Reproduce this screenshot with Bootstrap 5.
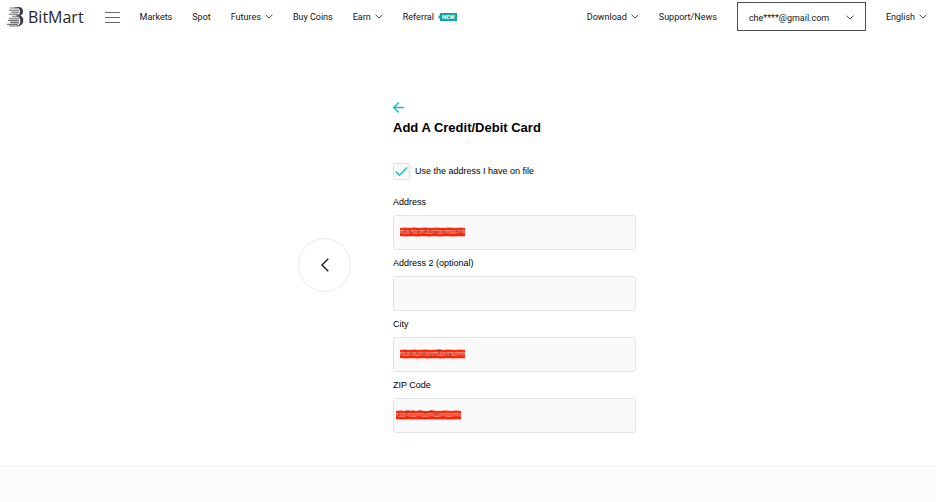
<!DOCTYPE html>
<html lang="en">
<head>
<meta charset="utf-8">
<meta name="viewport" content="width=device-width, initial-scale=1">
<title>BitMart - Add A Credit/Debit Card</title>
<link rel="stylesheet" href="https://cdn.jsdelivr.net/npm/bootstrap@5.3.0/dist/css/bootstrap.min.css">
<style>
body { font: 9px/15px "Liberation Sans", Arial, sans-serif; color: #000; background: #fbfbfb; }
a, button { color: inherit; }
svg { display: block; fill: none; flex: none; }
.topbar { font: 9px/14px Roboto, sans-serif; color: #1d1f24; padding: 2px 9px 2px 7px; background: #fff; }
.brand { font: 16px/20px "Open Sans", sans-serif; color: #24262d; gap: 4px; margin-right: 21px; }
.links { gap: 20px; }
.links a, .links button { font: 9px/14px Roboto, sans-serif; color: #111318; }
.account { width: 129px; height: 29px; border: 1px solid #4b4d52; padding: 2px 11px 0; }
.tag-new { font: bold 6px/8px Roboto, sans-serif; color: #fff; background: #12a5a0; padding: 0 2px; margin-left: 2px; position: relative; }
.tag-new::before { content: ""; position: absolute; left: -2px; top: 2px; border: 2px solid transparent; border-left: 0; border-right-color: #12a5a0; }
.stage { background: #fff; padding: 63px 2px 32px 0; gap: 42px; }
.round { width: 53px; height: 54px; border: 1px solid #ececec; }
.card-form { width: 243px; }
.back { height: 22px; }
.title { font-size: 13px; line-height: 20px; font-weight: 700; margin-bottom: 25px; }
.tick, .tick:checked { width: 17px; height: 17px; border: 1px solid #dde2e7; border-radius: 2px; background: #f7f8f8; }
.tick + svg { position: absolute; left: 2px; top: 3px; pointer-events: none; visibility: hidden; }
.tick:checked + svg { visibility: visible; }
.same { gap: 5px; margin-bottom: 15px; }
.field { margin-bottom: 6px; }
.field:last-child { margin-bottom: 0; }
.field label { margin-bottom: 5px; }
.field input { height: 35px; font-size: 9px; padding: 8px; border: 1px solid #e0e5ea; border-radius: 3px; background: #fafafa; }
.redact { position: absolute; left: 7px; top: 12px; pointer-events: none; }
.redact-zip { left: 3px; }
</style>
<script src="https://cdn.jsdelivr.net/npm/bootstrap@5.3.0/dist/js/bootstrap.bundle.min.js"></script>
</head>
<body>
<svg width="0" height="0" class="position-absolute" aria-hidden="true">
  <symbol id="chev" viewBox="0 0 8 5"><path d="M.5.6 4 4.100 7.500.6" stroke="#33353a" stroke-width=".9"/></symbol>
  <symbol id="scribble" viewBox="0 0 66 10">
    <path d="M0 2.300 5 1.900 9 2.400 14 1.900 19 2.400 25 1.900 31 2.400 37 1.900 43 2.400 49 1.900 55 2.400 60 1.900 65 2.200" stroke="#ff2a0c" stroke-width="2.600"/>
    <path d="M0 7.500 6 7.900 11 7.400 17 7.900 23 7.400 29 7.900 35 7.400 41 7.900 47 7.400 53 7.900 59 7.400 65 7.700" stroke="#ff2206" stroke-width="3"/>
    <path d="M0 5 5 4.600 10 5.100 16 4.600 22 5.100 28 4.600 34 5.100 40 4.600 46 5.100 52 4.600 58 5.100 65 4.800" stroke="#f4593f" stroke-width="2.200"/>
  </symbol>
</svg>
<header class="topbar d-flex align-items-center">
  <a href="#" class="brand d-flex align-items-center text-decoration-none">
    <svg width="17" height="21" viewBox="0 0 17 21" aria-hidden="true">
      <path d="M6 1h5.500c3 0 4.500 1.600 4.500 4.200 0 2.400-1 4-3 4.600 2.300.6 3.300 2 3.300 4.400 0 3.600-2.300 6-6 6H9c3-.5 4.300-2.500 4.300-5.300 0-2.800-1.300-3.900-4-4.300V9.400c2.500-.3 3.700-1.600 3.700-4 0-2.100-1-3-3-3.300Z" fill="#3d3e42"/>
      <path d="M3 2h8M2 4.200h10M4 6.300h8M2 8.300h9M5 10.200h8M2 12.300h10M1 14.400h11M3 16.400h9M0 18.400h11M2 20h9" stroke="#717275" stroke-width="1.100"/>
      <path d="M7 3.100h4M6 5.300h5M5 7.300h6M5 13.300h6M4 15.400h7M5 17.400h7" stroke="#aaa" stroke-width=".7"/>
    </svg>
    <span>BitMart</span>
  </a>
  <button class="btn p-0 border-0 me-3" aria-label="Menu">
    <svg width="15" height="12" viewBox="0 0 15 12"><path d="M0 1.500h15M0 6.500h15M0 11.500h15" stroke="#66686e"/></svg>
  </button>
  <nav class="links d-flex align-items-center flex-grow-1 ms-1">
    <a href="#" class="text-decoration-none">Markets</a>
    <a href="#" class="text-decoration-none">Spot</a>
    <button class="btn p-0 border-0 d-flex align-items-center gap-1">Futures <svg width="8" height="5"><use href="#chev"/></svg></button>
    <a href="#" class="text-decoration-none">Buy Coins</a>
    <button class="btn p-0 border-0 d-flex align-items-center gap-1">Earn <svg width="8" height="5"><use href="#chev"/></svg></button>
    <a href="#" class="text-decoration-none d-flex align-items-center gap-1">Referral <span class="tag-new">NEW</span></a>
  </nav>
  <div class="links d-flex align-items-center">
    <button class="btn p-0 border-0 d-flex align-items-center gap-1">Download <svg width="8" height="5"><use href="#chev"/></svg></button>
    <a href="#" class="text-decoration-none">Support/News</a>
    <button class="account btn rounded-0 d-flex align-items-center justify-content-between">che****@gmail.com <svg width="8" height="5"><use href="#chev"/></svg></button>
    <button class="btn p-0 border-0 d-flex align-items-center gap-1">English <svg width="8" height="5"><use href="#chev"/></svg></button>
  </div>
</header>
<main class="stage d-flex justify-content-center align-items-center">
  <button class="round btn rounded-circle p-0 d-flex align-items-center justify-content-center" aria-label="Previous">
    <svg width="8" height="14" viewBox="0 0 8 14"><path d="M7.300.7 1 7l6.300 6.300" stroke="#111" stroke-width="1.300"/></svg>
  </button>
  <form class="card-form">
    <a href="#" class="back d-flex align-items-center" aria-label="Back">
      <svg width="11" height="11" viewBox="0 0 11 11"><path d="M11 5.500H.8M5.700.5l-5 5 5 5" stroke="#13bdc0" stroke-width="1.300"/></svg>
    </a>
    <h1 class="title">Add A Credit/Debit Card</h1>
    <div class="same d-flex align-items-center">
      <div class="position-relative d-flex">
        <input type="checkbox" id="same" class="tick form-check-input m-0" checked>
        <svg width="13" height="11" viewBox="0 0 13 11"><path d="m1 5.500 3.500 3.700L12 1.500" stroke="#13bdc0" stroke-width="1.300"/></svg>
      </div>
      <label for="same">Use the address I have on file</label>
    </div>
    <div class="field">
      <label for="addr" class="d-block">Address</label>
      <div class="position-relative">
        <input type="text" id="addr" class="form-control">
        <svg class="redact" width="66" height="10"><use href="#scribble"/><path d="M5 3v3M9 2l2 4M18 3v4M24 4h3M30 3v3M33 5h6M43 3l2 4M49 2h3M56 4h3M61 3v4" stroke="#65423c" stroke-width=".8"/></svg>
      </div>
    </div>
    <div class="field">
      <label for="addr2" class="d-block">Address 2 (optional)</label>
      <input type="text" id="addr2" class="form-control">
    </div>
    <div class="field">
      <label for="city" class="d-block">City</label>
      <div class="position-relative">
        <input type="text" id="city" class="form-control">
        <svg class="redact" width="66" height="10"><use href="#scribble"/><path d="M6 1v4M10 4h3M16 4h2M22 4h4M30 5l1 4M38 1h4M39 1v4M46 2v3M50 4l1 4" stroke="#65423c" stroke-width=".8"/></svg>
      </div>
    </div>
    <div class="field">
      <label for="zip" class="d-block">ZIP Code</label>
      <div class="position-relative">
        <input type="text" id="zip" class="form-control">
        <svg class="redact redact-zip" width="66" height="10"><use href="#scribble"/><path d="M3 2v4M9 1h4M12 1l-2 4M16 1h3M22 1h3M28 3h3M33 1h4M38 4h5" stroke="#65423c" stroke-width=".8"/></svg>
      </div>
    </div>
  </form>
</main>
</body>
</html>
